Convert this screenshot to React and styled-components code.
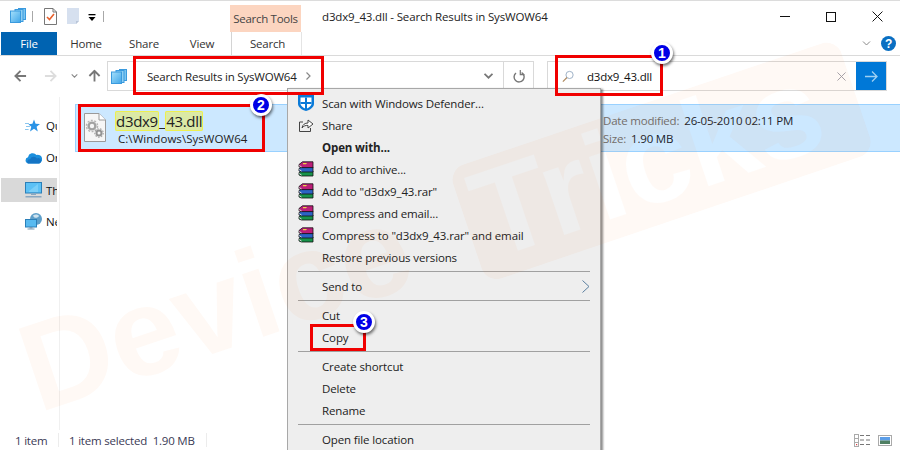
import React from "react";
import styled, { createGlobalStyle } from "styled-components";

const Global = createGlobalStyle`
  html, body { margin: 0; padding: 0; background: #fff; }
  * { box-sizing: border-box; }
`;

const font = `"Open Sans", "Noto Sans", sans-serif`;

const Page = styled.div`
  position: relative;
  width: 900px;
  height: 450px;
  overflow: hidden;
  background: #fff;
  font-family: ${font};
  font-size: 11.5px;
  letter-spacing: -0.2px;
  color: #1c1c1c;
  display: flex;
  flex-direction: column;
  border-top: 1px solid #dcdcdc;
`;

const Spacer = styled.span`
  display: block;
  flex: none;
  width: ${(p) => p.$w || 0}px;
  height: ${(p) => p.$h || 0}px;
`;

/* ---------- title bar ---------- */
const TitleBar = styled.div`
  height: 31px;
  display: flex;
  align-items: flex-start;
  flex: none;
`;
const QuickAccess = styled.div`
  width: 230px;
  flex: none;
  padding: 7px 0 0 10px;
  display: flex;
  align-items: flex-start;
`;
const QuickSep = styled.div`
  width: 1px;
  height: 11px;
  margin: 3px ${(p) => p.$after}px 0 ${(p) => p.$before}px;
  background: #a8a8a8;
`;
const QuickDownWrap = styled.div`
  margin: 6px 0 0 8px;
  display: flex;
`;
const ContextHeader = styled.div`
  width: 71px;
  flex: none;
  height: 27px;
  margin-top: 4px;
  background: #fcd5c0;
  display: flex;
  align-items: center;
  justify-content: center;
  color: #444;
  letter-spacing: -0.3px;
`;
const WindowTitle = styled.div`
  margin-left: 21px;
  margin-top: 7px;
  line-height: 18px;
  color: #222;
  flex: 1;
  letter-spacing: -0.15px;
`;
const WindowButtons = styled.div`
  display: flex;
  flex: none;
  width: 138px;
  padding-top: 9px;
`;
const WindowButton = styled.div`
  width: 46px;
  height: 13px;
  display: flex;
  align-items: center;
  justify-content: center;
`;

/* ---------- ribbon tabs ---------- */
const RibbonTabs = styled.div`
  height: 24px;
  flex: none;
  display: flex;
  align-items: stretch;
  border-bottom: 1px solid #dadada;
  padding-left: 1px;
`;
const FileTab = styled.div`
  width: 56px;
  height: 23px;
  background: #0063b1;
  color: #fff;
  display: flex;
  align-items: center;
  justify-content: center;
`;
const RibbonTab = styled.div`
  width: 58px;
  display: flex;
  align-items: center;
  justify-content: center;
  color: #333;
`;
const ContextTab = styled(RibbonTab)`
  width: 71px;
  padding-left: 2px;
  border-left: 1px solid #d4d4d4;
  border-right: 1px solid #e4e4e4;
`;
const RibbonEnd = styled.div`
  flex: 1;
  display: flex;
  align-items: center;
  justify-content: flex-end;
  padding-right: 4px;
  gap: 10px;
`;

/* ---------- nav row ---------- */
const NavRow = styled.div`
  height: 41px;
  flex: none;
  display: flex;
  align-items: flex-start;
  padding: 5px 13px 0 0;
`;
const NavButtons = styled.div`
  width: 107px;
  height: 30px;
  display: flex;
  align-items: center;
  padding-left: 14px;
`;
const AddressBox = styled.div`
  width: 427px;
  height: 30px;
  border: 1px solid #d9d9d9;
  display: flex;
  align-items: center;
`;
const Crumbs = styled.div`
  flex: 1;
  display: flex;
  align-items: center;
  padding-left: 3px;
  height: 100%;
`;
const CrumbText = styled.span`
  margin-left: 20px;
  color: #222;
`;
const CrumbArrow = styled.span`
  margin-left: 9px;
  display: flex;
`;
const BoxCell = styled.div`
  width: ${(p) => p.$w}px;
  height: 100%;
  border-left: ${(p) => (p.$line ? "1px solid #d9d9d9" : "none")};
  display: flex;
  align-items: center;
  justify-content: center;
`;
const SearchBox = styled.div`
  margin-left: 13px;
  flex: 1;
  height: 30px;
  border: 1px solid #d9d9d9;
  display: flex;
  align-items: center;
  padding-left: 14px;
`;
const SearchText = styled.span`
  margin-left: 13px;
  flex: 1;
  color: #111;
`;
const ClearButton = styled.span`
  display: flex;
  margin-right: 10px;
`;
const GoButton = styled.div`
  width: 30px;
  height: 28px;
  background: #0078d7;
  display: flex;
  align-items: center;
  justify-content: center;
`;

/* ---------- body ---------- */
const Body = styled.div`
  flex: 1;
  display: flex;
  min-height: 0;
`;
const Sidebar = styled.div`
  width: 60px;
  flex: none;
  border-right: 1px solid #f0f0f0;
  padding-top: 17px;
  display: flex;
  flex-direction: column;
`;
const SideItem = styled.div`
  height: ${(p) => p.$h}px;
  margin-left: 1px;
  width: 56px;
  overflow: hidden;
  white-space: nowrap;
  display: flex;
  align-items: center;
  padding-left: 24px;
  gap: 4px;
  background: ${(p) => (p.$active ? "#d9d9d9" : "transparent")};
  color: #111;
`;
const SideIcon = styled.div`
  width: 17px;
  flex: none;
  display: flex;
`;
const Results = styled.div`
  flex: 1;
  padding: 7px 0 0 15px;
`;
const ResultRow = styled.div`
  height: 48px;
  background: #cce8ff;
  border: 1px solid #99d1ff;
  border-right: none;
  display: flex;
  align-items: flex-start;
  padding: 8px 0 0 8px;
`;
const FileIconWrap = styled.div`
  width: 31px;
  flex: none;
  display: flex;
`;
const NameColumn = styled.div`
  width: 488px;
  flex: none;
  display: flex;
  flex-direction: column;
`;
const FileName = styled.div`
  font-size: 15px;
  line-height: 20px;
  margin-top: -3px;
  height: 21px;
  color: #222;
  display: flex;
  align-items: center;
  letter-spacing: -0.3px;
`;
const Hit = styled.span`
  display: block;
  background: #dbe9a6;
  box-shadow: inset 0 0 0 1px #eef04e;
  border-radius: 2px;
  padding: 0 1px;
`;
const FilePath = styled.div`
  line-height: 16px;
  color: #222;
  padding-left: 3px;
  letter-spacing: 0.05px;
`;
const MetaColumn = styled.div`
  display: flex;
  flex-direction: column;
  gap: 2px;
`;
const MetaLine = styled.div`
  line-height: 16px;
  display: flex;
  gap: 5px;
  color: #1e1e2a;
`;
const MetaKey = styled.span`
  color: #6d6d6d;
`;

/* ---------- status ---------- */
const StatusBar = styled.div`
  height: 20px;
  flex: none;
  display: flex;
  align-items: center;
  color: #3a3a55;
`;
const StatusCell = styled.div`
  width: ${(p) => p.$w}px;
  height: 14px;
  padding-left: ${(p) => p.$pad}px;
  border-right: 1px solid #ececec;
  display: flex;
  align-items: center;
  white-space: pre;
`;
const StatusIcons = styled.div`
  margin-left: auto;
  display: flex;
  gap: 7px;
  padding-right: 8px;
  align-items: center;
`;

/* ---------- overlays ---------- */
const Watermark = styled.svg`
  position: absolute;
  left: 0;
  top: -1px;
  width: 900px;
  height: 450px;
  pointer-events: none;
  z-index: 5;
`;
const Menu = styled.div`
  position: absolute;
  left: 287px;
  top: 87px;
  width: 314px;
  height: 380px;
  background: #eeeeee;
  border: 1px solid #a8a8a8;
  box-shadow: 2px 1px 2px rgba(0, 0, 0, 0.45);
  padding-top: 3px;
  z-index: 4;
  color: #222;
  letter-spacing: -0.13px;
`;
const MenuItem = styled.div`
  height: 22px;
  display: flex;
  align-items: center;
  padding: 0 10px;
  font-weight: ${(p) => (p.$bold ? 700 : 400)};
`;
const MenuIcon = styled.div`
  width: 24px;
  flex: none;
  display: flex;
`;
const MenuLabel = styled.span`
  flex: 1;
`;
const MenuSep = styled.div`
  height: 1px;
  margin: 3px 10px;
  background: #a0a0a0;
`;
const Callout = styled.div`
  position: absolute;
  left: ${(p) => p.$x}px;
  top: ${(p) => p.$y}px;
  width: ${(p) => p.$w}px;
  height: ${(p) => p.$h}px;
  border: 3px solid #f00000;
  z-index: 6;
`;
const Badge = styled.div`
  position: absolute;
  left: ${(p) => p.$x - 11}px;
  top: ${(p) => p.$y - 11}px;
  width: 22px;
  height: 22px;
  border-radius: 50%;
  background: #0000e6;
  border: 3px solid #fff;
  box-shadow: 1px 2px 3px rgba(0, 0, 0, 0.55);
  color: #fff;
  font-family: "Liberation Sans", sans-serif;
  font-weight: 700;
  font-size: 14px;
  letter-spacing: 0;
  display: flex;
  align-items: center;
  justify-content: center;
  z-index: 7;
`;

/* ---------- icons ---------- */
const StackIcon = () => (
  <svg width="16" height="15" viewBox="0 0 16 15">
    <defs>
      <linearGradient id="st" x1="0" y1="0" x2="1" y2="1">
        <stop offset="0" stopColor="#a6e0fb" />
        <stop offset="1" stopColor="#3fa5e8" />
      </linearGradient>
    </defs>
    <rect x="8.5" y="0.5" width="7" height="11" fill="#7cc6f0" stroke="#3a9ade" />
    <rect x="5" y="1.5" width="8" height="12" fill="#8fd0f3" stroke="#3a9ade" />
    <rect x="0.5" y="3" width="10" height="11.5" fill="url(#st)" stroke="#3a9ade" />
  </svg>
);
const CheckDoc = () => (
  <svg width="13" height="17" viewBox="0 0 13 17">
    <path d="M.5.5H9L12.5 4V16.5H.5Z" fill="#fff" stroke="#777" />
    <path d="M9 .5V4H12.5" fill="none" stroke="#777" />
    <path d="M3 9l2.5 2.5L10 6" fill="none" stroke="#e8602c" strokeWidth="1.6" />
  </svg>
);
const BlankDoc = () => (
  <svg width="13" height="17" viewBox="0 0 13 17">
    <path d="M0 0H12V13L9 16H0Z" fill="#d6e0ef" />
    <path d="M9 16V13H12Z" fill="#b9c6d8" />
  </svg>
);
const QuickDown = () => (
  <svg width="8" height="8" viewBox="0 0 8 8">
    <rect x="0.5" y="0" width="7" height="1.3" fill="#000" />
    <path d="M0.5 3H7.5L4 7Z" fill="#000" />
  </svg>
);
const Arrow = ({ color, flip, rot }) => (
  <svg width="13" height="14" viewBox="0 0 14 14" style={{ transform: rot ? `rotate(${rot}deg)` : undefined }}>
    <path
      d={flip ? "M1 7H12.5M7 1.5L12.5 7L7 12.5" : "M13 7H1.5M7 1.5L1.5 7L7 12.5"}
      fill="none"
      stroke={color}
      strokeWidth="2"
    />
  </svg>
);
const Chevron = ({ color = "#777", w = 8, h = 5, sw = 1.3 }) => (
  <svg width={w} height={h} viewBox="0 0 8 5">
    <path d="M0.5 .5L4 4L7.5 .5" fill="none" stroke={color} strokeWidth={sw} />
  </svg>
);
const Refresh = () => (
  <svg width="12" height="13" viewBox="0 0 12 13">
    <path d="M8.6 2.6A5 5 0 1 1 3 3" fill="none" stroke="#777" strokeWidth="1.4" />
    <path d="M7.3 0V4.6H11.5" fill="none" stroke="#777" strokeWidth="1.2" />
  </svg>
);
const Magnifier = () => (
  <svg width="12" height="13" viewBox="0 0 14 14">
    <circle cx="8.8" cy="5.2" r="4.2" fill="none" stroke="#8fa5bd" strokeWidth="1" />
    <path d="M5.8 8.2L1 13" stroke="#b08a60" strokeWidth="1.4" />
  </svg>
);
const Cross = ({ size = 9, color = "#9a9aa5", sw = 1 }) => (
  <svg width={size} height={size} viewBox="0 0 10 10">
    <path d="M.5 .5L9.5 9.5M9.5 .5L.5 9.5" stroke={color} strokeWidth={sw} fill="none" />
  </svg>
);
const GoArrow = () => (
  <svg width="13" height="11" viewBox="0 0 13 11">
    <path d="M0 5.5H12M7 .5L12 5.5L7 10.5" fill="none" stroke="#9fd0f2" strokeWidth="1.3" />
  </svg>
);
const Help = () => (
  <svg width="15" height="15" viewBox="0 0 15 15">
    <circle cx="7.5" cy="7.5" r="7.5" fill="#0a6fc2" />
    <text x="7.5" y="12" textAnchor="middle" fontSize="12" fontWeight="700" fontFamily="Liberation Sans" fill="#fff">?</text>
  </svg>
);
const Star = () => (
  <svg width="15" height="14" viewBox="0 0 15 14">
    <path d="M9 0.5L10.6 4.8L15 5L11.6 7.8L12.8 12.5L9 9.8L5 12.5L6.3 7.8L3.4 5.2L7.4 4.8Z" fill="#2a93e6" />
    <path d="M0 4.5H4M1 7.5H5M0 10.5H3.6" stroke="#8cc6ee" strokeWidth="1" />
  </svg>
);
const Cloud = () => (
  <svg width="17" height="13" viewBox="0 0 17 13">
    <path d="M3.5 12.5A3.2 3.2 0 0 1 3 6.2A4.8 4.8 0 0 1 11.5 4A3.6 3.6 0 0 1 14 12.5Z" fill="#1c8fdd" />
    <path d="M3 12.5A2.4 2.4 0 0 1 5 8.4A4 4 0 0 1 12 7.4A2.6 2.6 0 0 1 14.5 12.5Z" fill="#1474c4" />
  </svg>
);
const Monitor = () => (
  <svg width="17" height="16" viewBox="0 0 17 16">
    <rect x="0.5" y="0.5" width="16" height="10.5" fill="#5cc1f5" stroke="#2b7fb8" />
    <path d="M4 9L13 2V10H4Z" fill="#8fd8fa" opacity="0.6" />
    <rect x="6" y="11.5" width="5" height="1.5" fill="#8aa7c0" />
    <rect x="0.5" y="14" width="16" height="1.5" fill="#8aa7c0" />
  </svg>
);
const Network = () => (
  <svg width="17" height="17" viewBox="0 0 17 17">
    <circle cx="11" cy="6" r="6" fill="#5f9fc9" />
    <path d="M8 2.5C10 1 13 1 14 3C13 5 9 6 8 2.5Z" fill="#cfe3ef" />
    <rect x="0.5" y="6.5" width="11" height="7.5" fill="#58baf0" stroke="#2b7fb8" />
    <rect x="4.5" y="14" width="3" height="1.5" fill="#7b9ab2" />
    <rect x="2.5" y="15.5" width="7" height="1" fill="#7b9ab2" />
  </svg>
);
const GearDoc = () => (
  <svg width="22" height="29" viewBox="0 0 22 29">
    <path d="M.5.5H15L21.5 7V28.5H.5Z" fill="#f6f6f6" stroke="#9a9a9a" />
    <path d="M15 .5V7H21.5" fill="#fff" stroke="#9a9a9a" />
    <circle cx="8" cy="13" r="3.4" fill="none" stroke="#a2a2a2" strokeWidth="2.4" />
    <circle cx="8" cy="13" r="5.6" fill="none" stroke="#b5b5b5" strokeWidth="1.4" strokeDasharray="2 1.5" />
    <circle cx="15" cy="20" r="2.5" fill="none" stroke="#939393" strokeWidth="2" />
    <circle cx="15" cy="20" r="4.2" fill="none" stroke="#a5a5a5" strokeWidth="1.2" strokeDasharray="1.6 1.3" />
  </svg>
);
const Defender = () => (
  <svg width="16" height="16" viewBox="0 0 16 16">
    <path d="M0 0H16V9C16 12 12 15 8 16C4 15 0 12 0 9Z" fill="#0a7ad8" />
    <path d="M2.5 2.5H13.5V8.5C13.5 11 10.5 13 8 14C5.5 13 2.5 11 2.5 8.5Z" fill="#fff" />
    <path d="M7 2.5H9V7H13.5V9H9V14H7V9H2.5V7H7Z" fill="#0a7ad8" />
  </svg>
);
const Share = () => (
  <svg width="16" height="16" viewBox="0 0 16 16">
    <path d="M5 5H1.5V14.5H12.5V11" fill="none" stroke="#444" strokeWidth="1" />
    <path d="M4 11C4.5 7.5 7 6 10 6V3L15 7L10 11V8.4C7.5 8.2 5.5 9 4 11Z" fill="#fff" stroke="#444" strokeWidth="1" />
  </svg>
);
const Rar = () => (
  <svg width="16" height="16" viewBox="0 0 16 16">
    <path d="M1 11.5L4 10H15V15H3.5L1 14Z" fill="#17924a" stroke="#111" strokeWidth=".8" />
    <path d="M1 7.5L4 6H15V11H3.5L1 10Z" fill="#2a63c4" stroke="#111" strokeWidth=".8" />
    <path d="M1 3.5L4.5 .8H15V6.6H3.5L1 5.8Z" fill="#bb1e78" stroke="#111" strokeWidth=".8" />
    <path d="M1.2 4.6L3.5 5.8M1.2 8.6L3.5 10M1.2 12.6L3.5 14" stroke="#ddd" strokeWidth="1" />
    <path d="M5 2H9L8 3.2H5Z" fill="#ecd24a" />
  </svg>
);
const SendArrow = () => (
  <svg width="8" height="13" viewBox="0 0 8 13">
    <path d="M.5 .5L7 6.5L.5 12.5" fill="none" stroke="#5a7f9f" strokeWidth="1" />
  </svg>
);
const DetailsView = () => (
  <svg width="17" height="13" viewBox="0 0 17 13">
    <rect x=".5" y=".5" width="4" height="12" fill="#fff" stroke="#aaa" />
    <path d="M.5 4.5H4.5M.5 8.5H4.5" stroke="#aaa" />
    <path d="M6 1.5H10M12 1.5H16M6 6H10M12 6H16M6 10.5H10M12 10.5H16" stroke="#777" />
    <rect x="2" y="10" width="1.2" height="1.2" fill="#d44" />
  </svg>
);
const LargeView = () => (
  <svg width="14" height="11" viewBox="0 0 14 11">
    <rect x=".5" y=".5" width="13" height="10" fill="#fff" stroke="#aaa" />
    <rect x="2" y="2" width="10" height="3.5" fill="#5c9ee8" />
    <rect x="2" y="5.5" width="10" height="3.5" fill="#4f7f62" />
  </svg>
);

const rarItems = ["Add to archive...", 'Add to "d3dx9_43.rar"', "Compress and email...", 'Compress to "d3dx9_43.rar" and email'];

export default function App() {
  return (
    <Page>
      <Global />
      <TitleBar>
        <QuickAccess>
          <StackIcon />
          <QuickSep $before={6} $after={11} />
          <CheckDoc />
          <Spacer $w={10} />
          <BlankDoc />
          <QuickDownWrap><QuickDown /></QuickDownWrap>
          <QuickSep $before={7} $after={0} />
        </QuickAccess>
        <ContextHeader>Search Tools</ContextHeader>
        <WindowTitle>d3dx9_43.dll - Search Results in SysWOW64</WindowTitle>
        <WindowButtons>
          <WindowButton>
            <svg width="10" height="1" viewBox="0 0 10 1"><rect width="10" height="1" fill="#111" /></svg>
          </WindowButton>
          <WindowButton>
            <svg width="10" height="10" viewBox="0 0 10 10"><rect x=".5" y=".5" width="9" height="9" fill="none" stroke="#111" /></svg>
          </WindowButton>
          <WindowButton>
            <Cross size={11} color="#111" sw={0.9} />
          </WindowButton>
        </WindowButtons>
      </TitleBar>

      <RibbonTabs>
        <FileTab>File</FileTab>
        <RibbonTab>Home</RibbonTab>
        <RibbonTab>Share</RibbonTab>
        <RibbonTab>View</RibbonTab>
        <ContextTab>Search</ContextTab>
        <RibbonEnd>
          <Chevron color="#888" w={9} h={5} sw={1} />
          <Help />
        </RibbonEnd>
      </RibbonTabs>

      <NavRow>
        <NavButtons>
          <Arrow color="#777" />
          <Spacer $w={17} />
          <Arrow color="#ddd" flip />
          <Spacer $w={14} />
          <Chevron color="#888" w={7} h={4} />
          <Spacer $w={10} />
          <Arrow color="#777" rot={90} />
        </NavButtons>
        <AddressBox>
          <Crumbs>
            <StackIcon />
            <CrumbText>Search Results in SysWOW64</CrumbText>
            <CrumbArrow>
              <svg width="5" height="8" viewBox="0 0 5 8"><path d="M.5 .5L4 4L.5 7.5" fill="none" stroke="#888" strokeWidth="1.2" /></svg>
            </CrumbArrow>
          </Crumbs>
          <BoxCell $w={30}><Chevron color="#777" w={9} h={6} sw={1.5} /></BoxCell>
          <BoxCell $w={30} $line><Refresh /></BoxCell>
        </AddressBox>
        <SearchBox>
          <Magnifier />
          <SearchText>d3dx9_43.dll</SearchText>
          <ClearButton><Cross size={9} /></ClearButton>
          <GoButton><GoArrow /></GoButton>
        </SearchBox>
      </NavRow>

      <Body>
        <Sidebar>
          <SideItem $h={23}><SideIcon><Star /></SideIcon>Quick access</SideItem>
          <Spacer $h={9} />
          <SideItem $h={23}><SideIcon><Cloud /></SideIcon>OneDrive</SideItem>
          <Spacer $h={9} />
          <SideItem $h={24} $active><SideIcon><Monitor /></SideIcon>This PC</SideItem>
          <Spacer $h={8} />
          <SideItem $h={23}><SideIcon><Network /></SideIcon>Network</SideItem>
        </Sidebar>
        <Results>
          <ResultRow>
            <FileIconWrap><GearDoc /></FileIconWrap>
            <NameColumn>
              <FileName>
                <Hit>d3dx9</Hit>_<Hit>43.dll</Hit>
              </FileName>
              <FilePath>C:\Windows\SysWOW64</FilePath>
            </NameColumn>
            <MetaColumn>
              <MetaLine><MetaKey>Date modified:</MetaKey>26-05-2010 02:11 PM</MetaLine>
              <MetaLine><MetaKey>Size:</MetaKey>1.90 MB</MetaLine>
            </MetaColumn>
          </ResultRow>
        </Results>
      </Body>

      <StatusBar>
        <StatusCell $w={59} $pad={15}>1 item</StatusCell>
        <StatusCell $w={148} $pad={10}>{"1 item selected  1.90 MB"}</StatusCell>
        <StatusIcons>
          <DetailsView />
          <LargeView />
        </StatusIcons>
      </StatusBar>

      <Menu>
        <MenuItem><MenuIcon><Defender /></MenuIcon><MenuLabel>Scan with Windows Defender...</MenuLabel></MenuItem>
        <MenuItem><MenuIcon><Share /></MenuIcon><MenuLabel>Share</MenuLabel></MenuItem>
        <MenuItem $bold><MenuIcon /><MenuLabel>Open with...</MenuLabel></MenuItem>
        {rarItems.map((t) => (
          <MenuItem key={t}><MenuIcon><Rar /></MenuIcon><MenuLabel>{t}</MenuLabel></MenuItem>
        ))}
        <MenuItem><MenuIcon /><MenuLabel>Restore previous versions</MenuLabel></MenuItem>
        <MenuSep />
        <MenuItem><MenuIcon /><MenuLabel>Send to</MenuLabel><SendArrow /></MenuItem>
        <MenuSep />
        <MenuItem><MenuIcon /><MenuLabel>Cut</MenuLabel></MenuItem>
        <MenuItem><MenuIcon /><MenuLabel>Copy</MenuLabel></MenuItem>
        <MenuSep />
        <MenuItem><MenuIcon /><MenuLabel>Create shortcut</MenuLabel></MenuItem>
        <MenuItem><MenuIcon /><MenuLabel>Delete</MenuLabel></MenuItem>
        <MenuItem><MenuIcon /><MenuLabel>Rename</MenuLabel></MenuItem>
        <MenuSep />
        <MenuItem><MenuIcon /><MenuLabel>Open file location</MenuLabel></MenuItem>
      </Menu>

      <Watermark viewBox="0 0 900 450">
        <defs>
          <mask id="knock" maskUnits="userSpaceOnUse" x="-200" y="-200" width="1400" height="1000">
            <rect x="504" y="311" width="410" height="120" rx="16" fill="#fff" />
            <text x="515" y="410" fontFamily="Liberation Sans" fontWeight="700" fontSize="125" fill="#000">Tricks</text>
          </mask>
        </defs>
        <g transform="rotate(-18.7 47 410)" fill="rgb(255,120,30)" fillOpacity="0.045">
          <text x="38" y="410" fontFamily="Liberation Sans" fontWeight="700" fontSize="125">Device</text>
          <rect x="504" y="311" width="410" height="120" rx="16" mask="url(#knock)" />
        </g>
      </Watermark>

      <Callout $x={133} $y={55} $w={191} $h={39} />
      <Callout $x={555} $y={54} $w={108} $h={41} />
      <Callout $x={78} $y={103} $w={187} $h={48} />
      <Callout $x={310} $y={323} $w={56} $h={27} />
      <Badge $x={662} $y={52}>1</Badge>
      <Badge $x={261} $y={104}>2</Badge>
      <Badge $x={364} $y={321}>3</Badge>
    </Page>
  );
}
